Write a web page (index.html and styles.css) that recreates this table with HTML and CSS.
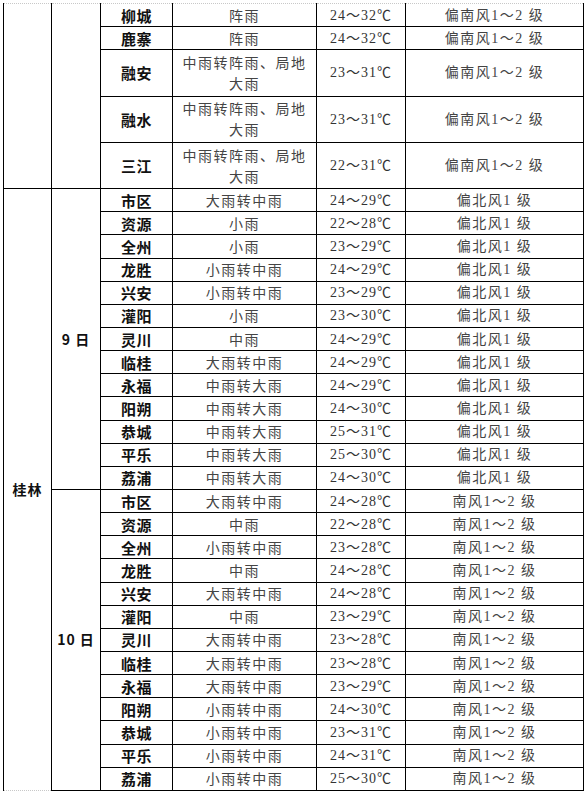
FILE: index.html
```html
<!DOCTYPE html>
<html lang="zh">
<head>
<meta charset="utf-8">
<link rel="stylesheet" href="styles.css">
</head>
<body>
<table class="fc">
<colgroup>
<col class="c-city"><col class="c-date"><col class="c-dist"><col class="c-wx"><col class="c-temp"><col class="c-wind">
</colgroup>
<tbody>
<tr class="first"><td class="city top" rowspan="5"></td><td class="date top" rowspan="5"></td><td class="dist">柳城</td><td class="wx">阵雨</td><td class="temp">24～32℃</td><td class="wind">偏南风1～2 级</td></tr>
<tr><td class="dist">鹿寨</td><td class="wx">阵雨</td><td class="temp">24～32℃</td><td class="wind">偏南风1～2 级</td></tr>
<tr class="tall"><td class="dist">融安</td><td class="wx">中雨转阵雨、局地<br>大雨</td><td class="temp">23～31℃</td><td class="wind">偏南风1～2 级</td></tr>
<tr class="tall"><td class="dist">融水</td><td class="wx">中雨转阵雨、局地<br>大雨</td><td class="temp">23～31℃</td><td class="wind">偏南风1～2 级</td></tr>
<tr class="tall"><td class="dist">三江</td><td class="wx">中雨转阵雨、局地<br>大雨</td><td class="temp">22～31℃</td><td class="wind">偏南风1～2 级</td></tr>

<tr><td class="city bottom" rowspan="26">桂林</td><td class="date" rowspan="13">9 日</td><td class="dist">市区</td><td class="wx">大雨转中雨</td><td class="temp">24～29℃</td><td class="wind">偏北风1 级</td></tr>
<tr><td class="dist">资源</td><td class="wx">小雨</td><td class="temp">22～28℃</td><td class="wind">偏北风1 级</td></tr>
<tr><td class="dist">全州</td><td class="wx">小雨</td><td class="temp">23～29℃</td><td class="wind">偏北风1 级</td></tr>
<tr><td class="dist">龙胜</td><td class="wx">小雨转中雨</td><td class="temp">24～29℃</td><td class="wind">偏北风1 级</td></tr>
<tr><td class="dist">兴安</td><td class="wx">小雨转中雨</td><td class="temp">23～29℃</td><td class="wind">偏北风1 级</td></tr>
<tr><td class="dist">灌阳</td><td class="wx">小雨</td><td class="temp">23～30℃</td><td class="wind">偏北风1 级</td></tr>
<tr><td class="dist">灵川</td><td class="wx">中雨</td><td class="temp">24～29℃</td><td class="wind">偏北风1 级</td></tr>
<tr><td class="dist">临桂</td><td class="wx">大雨转中雨</td><td class="temp">24～29℃</td><td class="wind">偏北风1 级</td></tr>
<tr><td class="dist">永福</td><td class="wx">中雨转大雨</td><td class="temp">24～29℃</td><td class="wind">偏北风1 级</td></tr>
<tr><td class="dist">阳朔</td><td class="wx">中雨转大雨</td><td class="temp">24～30℃</td><td class="wind">偏北风1 级</td></tr>
<tr><td class="dist">恭城</td><td class="wx">中雨转大雨</td><td class="temp">25～31℃</td><td class="wind">偏北风1 级</td></tr>
<tr><td class="dist">平乐</td><td class="wx">中雨转大雨</td><td class="temp">25～30℃</td><td class="wind">偏北风1 级</td></tr>
<tr><td class="dist">荔浦</td><td class="wx">中雨转大雨</td><td class="temp">24～30℃</td><td class="wind">偏北风1 级</td></tr>

<tr><td class="date" rowspan="13">10 日</td><td class="dist">市区</td><td class="wx">大雨转中雨</td><td class="temp">24～28℃</td><td class="wind">南风1～2 级</td></tr>
<tr><td class="dist">资源</td><td class="wx">中雨</td><td class="temp">22～28℃</td><td class="wind">南风1～2 级</td></tr>
<tr><td class="dist">全州</td><td class="wx">小雨转中雨</td><td class="temp">23～28℃</td><td class="wind">南风1～2 级</td></tr>
<tr><td class="dist">龙胜</td><td class="wx">中雨</td><td class="temp">24～28℃</td><td class="wind">南风1～2 级</td></tr>
<tr><td class="dist">兴安</td><td class="wx">大雨转中雨</td><td class="temp">24～28℃</td><td class="wind">南风1～2 级</td></tr>
<tr><td class="dist">灌阳</td><td class="wx">中雨</td><td class="temp">23～29℃</td><td class="wind">南风1～2 级</td></tr>
<tr><td class="dist">灵川</td><td class="wx">大雨转中雨</td><td class="temp">23～28℃</td><td class="wind">南风1～2 级</td></tr>
<tr><td class="dist">临桂</td><td class="wx">大雨转中雨</td><td class="temp">23～28℃</td><td class="wind">南风1～2 级</td></tr>
<tr><td class="dist">永福</td><td class="wx">大雨转中雨</td><td class="temp">23～29℃</td><td class="wind">南风1～2 级</td></tr>
<tr><td class="dist">阳朔</td><td class="wx">小雨转中雨</td><td class="temp">24～30℃</td><td class="wind">南风1～2 级</td></tr>
<tr><td class="dist">恭城</td><td class="wx">小雨转中雨</td><td class="temp">23～31℃</td><td class="wind">南风1～2 级</td></tr>
<tr><td class="dist">平乐</td><td class="wx">小雨转中雨</td><td class="temp">24～31℃</td><td class="wind">南风1～2 级</td></tr>
<tr><td class="dist">荔浦</td><td class="wx">小雨转中雨</td><td class="temp">25～30℃</td><td class="wind">南风1～2 级</td></tr>
</tbody>
</table>
</body>
</html>
```

FILE: styles.css
```css
html, body {
  margin: 0;
  padding: 0;
  background: #ffffff;
}

body {
  padding: 3px 0 0 3px;
  font-family: "Liberation Serif", "Noto Sans CJK SC", serif;
  color: #333333;
}

.fc {
  border-collapse: collapse;
  table-layout: fixed;
  width: 580px;
}

.c-city { width: 48px; }
.c-date { width: 49px; }
.c-dist { width: 72px; }
.c-wx { width: 144px; }
.c-temp { width: 89px; }
.c-wind { width: 178px; }

.fc td {
  border: 1px solid #000000;
  padding: 0 2px;
  text-align: center;
  vertical-align: middle;
  font-size: 14px;
  line-height: 21px;
  letter-spacing: 1.5px;
  overflow: hidden;
  white-space: nowrap;
}

.fc tr {
  height: 23.15px;
}

.fc tr.tall {
  height: 46.3px;
}

.fc tr.first td {
  border-top: 1px dotted #c8c8c8;
}

.fc td.city,
.fc td.date {
  font-family: "Noto Sans CJK SC", sans-serif;
  font-weight: 700;
  color: #111111;
  font-size: 14px;
  letter-spacing: 1px;
}

.fc td.city.bottom {
  border-bottom: 1px dotted #c8c8c8;
}

.fc td.dist {
  font-family: "Noto Sans CJK SC", sans-serif;
  font-weight: 700;
  font-size: 15px;
  color: #111111;
  letter-spacing: 0.5px;
}

.fc td.wx {
  font-family: "Noto Sans CJK SC", sans-serif;
  color: #444444;
}

.fc td.temp {
  color: #333333;
  letter-spacing: 1px;
}

.fc td.wind {
  color: #444444;
}
```
